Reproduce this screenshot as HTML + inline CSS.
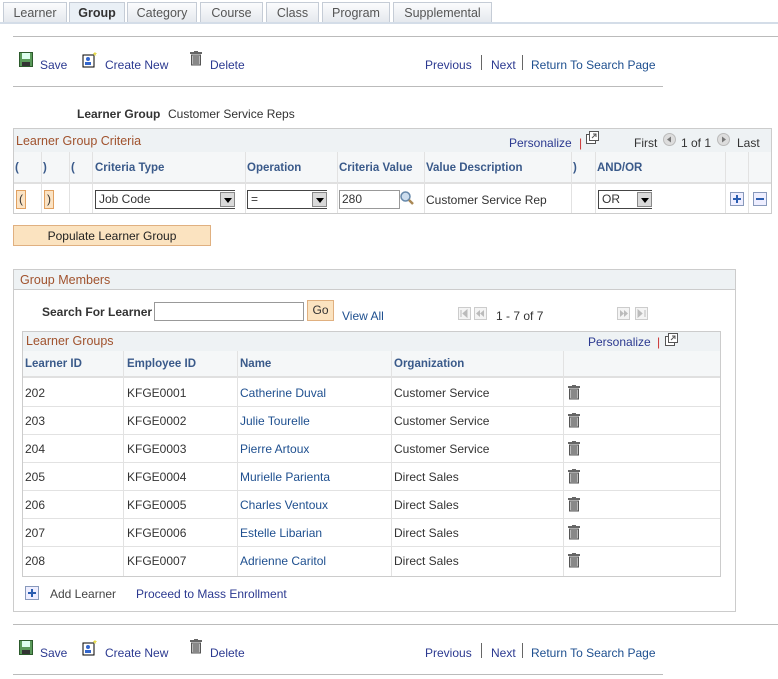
<!DOCTYPE html>
<html><head><style>
*{margin:0;padding:0;box-sizing:border-box}
body{width:778px;height:679px;background:#fff;font-family:"Liberation Sans",Arial,sans-serif;font-size:12px;color:#333;position:relative;overflow:hidden}
.a{position:absolute;white-space:nowrap}
.tab{position:absolute;top:2px;height:20px;border:1px solid #c5ccd6;border-bottom:none;background:linear-gradient(#fbfcfd,#e5e9ee);color:#555;font-size:12.5px;text-align:center;line-height:20px}
.tab.on{background:#eaf0f6;color:#333;font-weight:bold;height:21px}
.lk{color:#2b3990}
.lnk{color:#1e4f8f}
.brn{color:#a0522d;font-size:12.5px}
.hd{font-weight:bold;color:#3a5a8a;font-size:11.5px}
.hline{position:absolute;height:1px;background:#bbb}
.sel{position:absolute;height:19px;border:1px solid #444;border-right:none;background:#fff;font-size:12px;padding:1px 3px;color:#333}
.sel b{position:absolute;right:0;top:1px;width:15px;height:15px;background:#d9d9d9;border:1px solid #888}
.sel b:after{content:"";position:absolute;left:3px;top:5px;border:4px solid transparent;border-top:5px solid #000}
.vl{position:absolute;width:1px;background:#e2e2e2}
</style></head><body>
<div class="tab" style="left:3px;width:64px">Learner</div>
<div class="tab on" style="left:69px;width:56px">Group</div>
<div class="tab" style="left:127px;width:70px">Category</div>
<div class="tab" style="left:200px;width:63px">Course</div>
<div class="tab" style="left:266px;width:53px">Class</div>
<div class="tab" style="left:322px;width:68px">Program</div>
<div class="tab" style="left:393px;width:99px">Supplemental</div>
<div class="a" style="left:0;top:22px;width:778px;height:2px;background:#d4dde8"></div>
<div class="hline" style="left:13px;top:36px;width:765px"></div>

<svg class="a" style="left:19px;top:52px" width="14" height="15"><rect x="0.5" y="0.5" width="13" height="14" fill="#5a9a5a" stroke="#2c5a2c"/><rect x="3" y="1" width="8" height="6" fill="#dfe"/><rect x="3" y="10" width="8" height="4" fill="#333"/></svg>
<div class="a lk" style="left:40px;top:58px">Save</div>
<svg class="a" style="left:82px;top:51px" width="18" height="17"><rect x="1" y="4" width="11" height="12" fill="#fff" stroke="#000"/><circle cx="6" cy="8" r="2" fill="#36c"/><rect x="3" y="11" width="6" height="3" fill="#36c"/><text x="11" y="8" font-size="10" fill="#dc0">*</text></svg>
<div class="a lk" style="left:105px;top:58px">Create New</div>
<svg class="a" style="left:190px;top:51px" width="12" height="15"><rect x="0" y="1" width="12" height="2" fill="#666"/><rect x="4" y="0" width="4" height="2" fill="#666"/><rect x="1.5" y="4" width="9" height="10" fill="#bbb" stroke="#555"/><path d="M4 5v8M6 5v8M8 5v8" stroke="#555"/></svg>
<div class="a lk" style="left:210px;top:58px">Delete</div>
<div class="a lk" style="left:425px;top:58px">Previous</div>
<div class="a" style="left:481px;top:55px;width:1px;height:15px;background:#666"></div>
<div class="a lk" style="left:491px;top:58px">Next</div>
<div class="a" style="left:522px;top:55px;width:1px;height:15px;background:#666"></div>
<div class="a lnk" style="left:531px;top:58px">Return To Search Page</div>
<div class="hline" style="left:13px;top:86px;width:650px"></div>

<div class="a" style="left:77px;top:107px;font-weight:bold">Learner Group</div>
<div class="a" style="left:168px;top:107px">Customer Service Reps</div>

<div class="a" style="left:13px;top:128px;width:759px;height:86px;border:1px solid #ccc"></div>
<div class="a" style="left:14px;top:129px;width:757px;height:23px;background:#eef2f4"></div>
<div class="a brn" style="left:16px;top:134px">Learner Group Criteria</div>
<div class="a lk" style="left:509px;top:136px">Personalize</div>
<div class="a" style="left:579px;top:136px;color:#c33">|</div>
<svg class="a" style="left:586px;top:131px" width="13" height="13"><rect x="0.5" y="3.5" width="9" height="9" fill="#fff" stroke="#555"/><rect x="3.5" y="0.5" width="9" height="9" fill="#fff" stroke="#555"/><path d="M6 7l4-4M7 3h3v3" stroke="#555" fill="none"/></svg>
<div class="a" style="left:634px;top:136px">First</div>
<svg class="a" style="left:663px;top:133px" width="13" height="13"><circle cx="6.5" cy="6.5" r="6" fill="#ddd" stroke="#bbb"/><path d="M8 3.5v6l-4-3z" fill="#777"/></svg>
<div class="a" style="left:681px;top:136px">1 of 1</div>
<svg class="a" style="left:717px;top:133px" width="13" height="13"><circle cx="6.5" cy="6.5" r="6" fill="#ddd" stroke="#bbb"/><path d="M5 3.5v6l4-3z" fill="#777"/></svg>
<div class="a" style="left:737px;top:136px">Last</div>
<div class="a" style="left:14px;top:152px;width:757px;height:32px;background:#f5f7f8;border-bottom:2px solid #e0e0e0"></div>
<div class="vl" style="left:41px;top:152px;height:61px"></div>
<div class="vl" style="left:69px;top:152px;height:61px"></div>
<div class="vl" style="left:92px;top:152px;height:61px"></div>
<div class="vl" style="left:245px;top:152px;height:61px"></div>
<div class="vl" style="left:337px;top:152px;height:61px"></div>
<div class="vl" style="left:424px;top:152px;height:61px"></div>
<div class="vl" style="left:571px;top:152px;height:61px"></div>
<div class="vl" style="left:595px;top:152px;height:61px"></div>
<div class="vl" style="left:725px;top:152px;height:61px"></div>
<div class="vl" style="left:748px;top:152px;height:61px"></div>
<div class="a hd" style="left:15px;top:162px">(</div>
<div class="a hd" style="left:43px;top:162px">)</div>
<div class="a hd" style="left:71px;top:162px">(</div>
<div class="a hd" style="left:95px;top:162px">Criteria Type</div>
<div class="a hd" style="left:247px;top:162px">Operation</div>
<div class="a hd" style="left:339px;top:162px">Criteria Value</div>
<div class="a hd" style="left:426px;top:162px">Value Description</div>
<div class="a hd" style="left:573px;top:162px">)</div>
<div class="a hd" style="left:597px;top:162px">AND/OR</div>
<div class="a" style="left:16px;top:190px;width:10px;height:19px;background:#fbe3c4;border:1px solid #e0a060;text-align:center;line-height:17px">(</div>
<div class="a" style="left:44px;top:190px;width:10px;height:19px;background:#fbe3c4;border:1px solid #e0a060;text-align:center;line-height:17px">)</div>
<div class="sel" style="left:95px;top:190px;width:140px">Job Code<b></b></div>
<div class="sel" style="left:247px;top:190px;width:80px">=<b></b></div>
<div class="a" style="left:339px;top:190px;width:61px;height:19px;border:1px solid #999;padding:1px 2px">280</div>
<svg class="a" style="left:400px;top:191px" width="14" height="14"><circle cx="5.5" cy="5.5" r="4.5" fill="#cde" stroke="#68a" stroke-width="1.5"/><path d="M9 9l4 4" stroke="#a85" stroke-width="2.5"/></svg>
<div class="a" style="left:426px;top:193px">Customer Service Rep</div>
<div class="sel" style="left:598px;top:190px;width:54px">OR<b></b></div>
<svg class="a" style="left:730px;top:192px" width="14" height="14"><rect x="0.5" y="0.5" width="13" height="13" fill="#eef" stroke="#8899bb"/><path d="M7 3v8M3 7h8" stroke="#2a5db0" stroke-width="2"/></svg>
<svg class="a" style="left:753px;top:192px" width="14" height="14"><rect x="0.5" y="0.5" width="13" height="13" fill="#eef" stroke="#8899bb"/><path d="M3 7h8" stroke="#2a5db0" stroke-width="2"/></svg>

<div class="a" style="left:13px;top:225px;width:198px;height:21px;background:#fbe3c0;border:1px solid #e0b080;text-align:center;line-height:20px;color:#222">Populate Learner Group</div>

<div class="a" style="left:13px;top:269px;width:723px;height:343px;border:1px solid #ccc"></div>
<div class="a" style="left:14px;top:270px;width:721px;height:20px;background:#eef2f4;border-bottom:1px solid #ccc"></div>
<div class="a brn" style="left:20px;top:273px">Group Members</div>
<div class="a" style="left:42px;top:305px;font-weight:bold">Search For Learner</div>
<div class="a" style="left:154px;top:302px;width:150px;height:19px;border:1px solid #999"></div>
<div class="a" style="left:307px;top:300px;width:27px;height:21px;background:#fbe3c0;border:1px solid #e0b080;text-align:center;line-height:19px">Go</div>
<div class="a lnk" style="left:342px;top:309px">View All</div>
<svg class="a" style="left:458px;top:307px" width="30" height="13"><rect x="0.5" y="0.5" width="12" height="12" fill="#f4f4f4" stroke="#ccc"/><path d="M3 3v7M9 3l-4 3.5 4 3.5z" fill="#bbb" stroke="#bbb"/><rect x="16.5" y="0.5" width="12" height="12" fill="#f4f4f4" stroke="#ccc"/><path d="M22 3l-4 3.5 4 3.5zM26 3l-4 3.5 4 3.5z" fill="#bbb"/></svg>
<div class="a" style="left:496px;top:309px">1 - 7 of 7</div>
<svg class="a" style="left:617px;top:307px" width="32" height="13"><rect x="0.5" y="0.5" width="12" height="12" fill="#f4f4f4" stroke="#ccc"/><path d="M3 3l4 3.5-4 3.5zM7 3l4 3.5-4 3.5z" fill="#bbb"/><rect x="18.5" y="0.5" width="12" height="12" fill="#f4f4f4" stroke="#ccc"/><path d="M21 3l4 3.5-4 3.5zM28 3v7" fill="#bbb" stroke="#bbb"/></svg>

<div class="a" style="left:22px;top:331px;width:699px;height:246px;border:1px solid #ccc"></div>
<div class="a" style="left:23px;top:332px;width:697px;height:19px;background:#eef2f4"></div>
<div class="a brn" style="left:26px;top:334px">Learner Groups</div>
<div class="a lk" style="left:588px;top:335px">Personalize</div>
<div class="a" style="left:657px;top:335px;color:#c33">|</div>
<svg class="a" style="left:665px;top:333px" width="13" height="13"><rect x="0.5" y="3.5" width="9" height="9" fill="#fff" stroke="#555"/><rect x="3.5" y="0.5" width="9" height="9" fill="#fff" stroke="#555"/><path d="M6 7l4-4M7 3h3v3" stroke="#555" fill="none"/></svg>
<div class="a" style="left:23px;top:351px;width:697px;height:27px;background:#f5f7f8;border-bottom:2px solid #e0e0e0"></div>
<div class="vl" style="left:123px;top:351px;height:225px"></div>
<div class="vl" style="left:237px;top:351px;height:225px"></div>
<div class="vl" style="left:391px;top:351px;height:225px"></div>
<div class="vl" style="left:563px;top:351px;height:225px"></div>
<div class="a hd" style="left:25px;top:358px">Learner ID</div>
<div class="a hd" style="left:127px;top:358px">Employee ID</div>
<div class="a hd" style="left:240px;top:358px">Name</div>
<div class="a hd" style="left:394px;top:358px">Organization</div>
<div class="a" style="left:23px;top:406px;width:697px;height:1px;background:#e2e2e2"></div>
<div class="a" style="left:23px;top:434px;width:697px;height:1px;background:#e2e2e2"></div>
<div class="a" style="left:23px;top:462px;width:697px;height:1px;background:#e2e2e2"></div>
<div class="a" style="left:23px;top:490px;width:697px;height:1px;background:#e2e2e2"></div>
<div class="a" style="left:23px;top:518px;width:697px;height:1px;background:#e2e2e2"></div>
<div class="a" style="left:23px;top:546px;width:697px;height:1px;background:#e2e2e2"></div>

<div class="a" style="left:25px;top:386px">202</div><div class="a" style="left:127px;top:386px">KFGE0001</div><div class="a lnk" style="left:240px;top:386px">Catherine Duval</div><div class="a" style="left:394px;top:386px">Customer Service</div>
<div class="a" style="left:25px;top:414px">203</div><div class="a" style="left:127px;top:414px">KFGE0002</div><div class="a lnk" style="left:240px;top:414px">Julie Tourelle</div><div class="a" style="left:394px;top:414px">Customer Service</div>
<div class="a" style="left:25px;top:442px">204</div><div class="a" style="left:127px;top:442px">KFGE0003</div><div class="a lnk" style="left:240px;top:442px">Pierre Artoux</div><div class="a" style="left:394px;top:442px">Customer Service</div>
<div class="a" style="left:25px;top:470px">205</div><div class="a" style="left:127px;top:470px">KFGE0004</div><div class="a lnk" style="left:240px;top:470px">Murielle Parienta</div><div class="a" style="left:394px;top:470px">Direct Sales</div>
<div class="a" style="left:25px;top:498px">206</div><div class="a" style="left:127px;top:498px">KFGE0005</div><div class="a lnk" style="left:240px;top:498px">Charles Ventoux</div><div class="a" style="left:394px;top:498px">Direct Sales</div>
<div class="a" style="left:25px;top:526px">207</div><div class="a" style="left:127px;top:526px">KFGE0006</div><div class="a lnk" style="left:240px;top:526px">Estelle Libarian</div><div class="a" style="left:394px;top:526px">Direct Sales</div>
<div class="a" style="left:25px;top:554px">208</div><div class="a" style="left:127px;top:554px">KFGE0007</div><div class="a lnk" style="left:240px;top:554px">Adrienne Caritol</div><div class="a" style="left:394px;top:554px">Direct Sales</div>

<svg class="a" style="left:568px;top:385px" width="12" height="186">
<defs><g id="t"><rect x="0" y="1" width="12" height="2" fill="#666"/><rect x="4" y="0" width="4" height="2" fill="#666"/><rect x="1.5" y="4" width="9" height="10" fill="#bbb" stroke="#555"/><path d="M4 5v8M6 5v8M8 5v8" stroke="#555"/></g></defs>
<use href="#t" y="0"/><use href="#t" y="28"/><use href="#t" y="56"/><use href="#t" y="84"/><use href="#t" y="112"/><use href="#t" y="140"/><use href="#t" y="168"/>
</svg>

<svg class="a" style="left:25px;top:586px" width="14" height="14"><rect x="0.5" y="0.5" width="13" height="13" fill="#eef" stroke="#8899bb"/><path d="M7 3v8M3 7h8" stroke="#2a5db0" stroke-width="2"/></svg>
<div class="a" style="left:50px;top:587px;color:#444">Add Learner</div>
<div class="a lk" style="left:136px;top:587px">Proceed to Mass Enrollment</div>

<div class="hline" style="left:13px;top:624px;width:765px"></div>

<svg class="a" style="left:19px;top:640px" width="14" height="15"><rect x="0.5" y="0.5" width="13" height="14" fill="#5a9a5a" stroke="#2c5a2c"/><rect x="3" y="1" width="8" height="6" fill="#dfe"/><rect x="3" y="10" width="8" height="4" fill="#333"/></svg>
<div class="a lk" style="left:40px;top:646px">Save</div>
<svg class="a" style="left:82px;top:639px" width="18" height="17"><rect x="1" y="4" width="11" height="12" fill="#fff" stroke="#000"/><circle cx="6" cy="8" r="2" fill="#36c"/><rect x="3" y="11" width="6" height="3" fill="#36c"/><text x="11" y="8" font-size="10" fill="#dc0">*</text></svg>
<div class="a lk" style="left:105px;top:646px">Create New</div>
<svg class="a" style="left:190px;top:639px" width="12" height="15"><rect x="0" y="1" width="12" height="2" fill="#666"/><rect x="4" y="0" width="4" height="2" fill="#666"/><rect x="1.5" y="4" width="9" height="10" fill="#bbb" stroke="#555"/><path d="M4 5v8M6 5v8M8 5v8" stroke="#555"/></svg>
<div class="a lk" style="left:210px;top:646px">Delete</div>
<div class="a lk" style="left:425px;top:646px">Previous</div>
<div class="a" style="left:481px;top:643px;width:1px;height:15px;background:#666"></div>
<div class="a lk" style="left:491px;top:646px">Next</div>
<div class="a" style="left:522px;top:643px;width:1px;height:15px;background:#666"></div>
<div class="a lnk" style="left:531px;top:646px">Return To Search Page</div>
<div class="hline" style="left:13px;top:674px;width:650px"></div>
</body></html>
